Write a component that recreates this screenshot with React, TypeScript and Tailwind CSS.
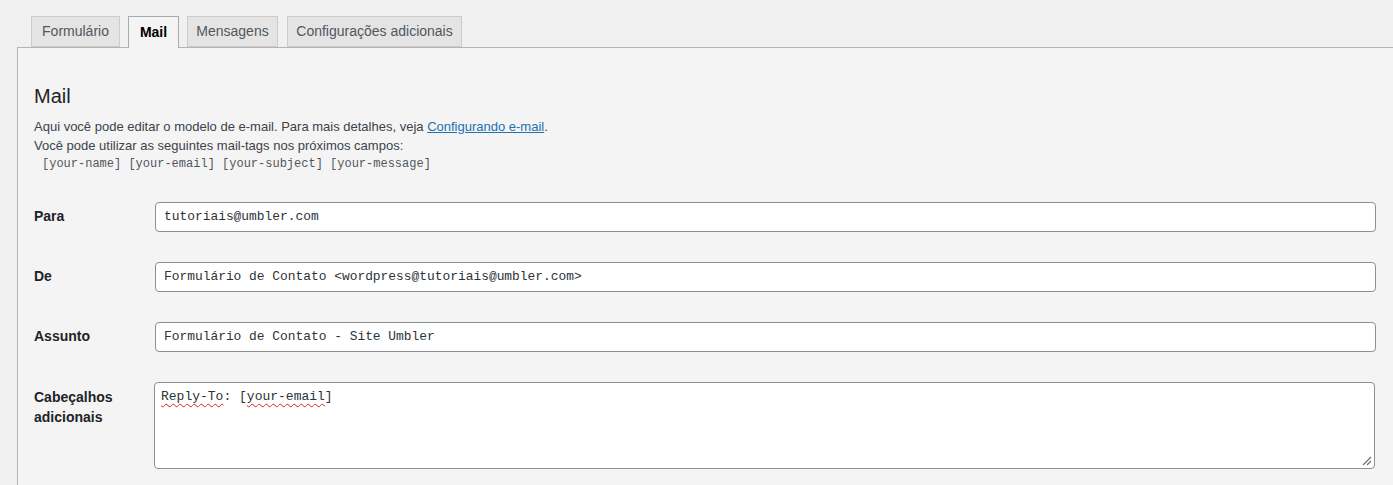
import React from "react";

const sans = { fontFamily: '"Liberation Sans", Arial, sans-serif' };
const mono = { fontFamily: '"Liberation Mono", "DejaVu Sans Mono", monospace' };

function Tab({ label, active, w }: { label: string; active?: boolean; w: string }) {
  return (
    <div
      className={
        active
          ? `relative z-10 -mb-px flex h-[32px] ${w} items-center justify-center border border-b-0 border-[#aaaaaa] bg-[#f4f4f4] text-[14px] font-bold text-[#000]`
          : `-mb-px flex h-[31px] ${w} items-center justify-center border border-[#cccccc] bg-[#e4e4e4] text-[14px] text-[#50575e]`
      }
    >
      {label}
    </div>
  );
}

function Row({ label, value }: { label: string; value: string }) {
  return (
    <div className="grid grid-cols-[121px_1fr] py-[15px]">
      <div className="pt-[4px] text-[14px] leading-[20px] font-bold text-[#1d2327]">{label}</div>
      <div
        className="flex h-[30px] items-center rounded-[4px] border border-[#8c8f94] bg-white px-[8px] text-[12.9px] text-[#2c3338]"
        style={mono}
      >
        {value}
      </div>
    </div>
  );
}

export default function App() {
  return (
    <div className="flex h-[485px] w-full flex-col overflow-hidden bg-[#f0f0f0] pt-[16px] pl-[17px]" style={sans}>
      <div className="flex pl-[14px]">
        <Tab label="Formulário" w="w-[89px]" />
        <div className="w-[8px]" />
        <Tab label="Mail" active w="w-[51px]" />
        <div className="w-[8px]" />
        <Tab label="Mensagens" w="w-[91px]" />
        <div className="w-[9px]" />
        <Tab label="Configurações adicionais" w="w-[175px]" />
      </div>
      <div className="flex-1 border-t border-l border-[#b4b4b4] bg-[#f4f4f4] pr-[17px] pl-[16px]">
        <h2 className="mt-[35px] text-[20px] leading-[26px] font-normal text-[#1d2327]">Mail</h2>
        <div className="mt-[8px] text-[13px] leading-[19px] text-[#3c434a]">
          <p>
            Aqui você pode editar o modelo de e-mail. Para mais detalhes, veja{" "}
            <a className="text-[#2271b1] underline">Configurando e-mail</a>.
          </p>
          <p>Você pode utilizar as seguintes mail-tags nos próximos campos:</p>
          <p className="pl-[8px] text-[12px] text-[#50575e]" style={mono}>
            [your-name] [your-email] [your-subject] [your-message]
          </p>
        </div>
        <div className="mt-[13px]">
          <Row label="Para" value="tutoriais@umbler.com" />
          <Row label="De" value="Formulário de Contato <wordpress@tutoriais@umbler.com>" />
          <Row label="Assunto" value="Formulário de Contato - Site Umbler" />
          <div className="grid grid-cols-[120px_1fr] py-[15px]">
            <div className="pt-[5px] text-[14px] leading-[20px] font-bold text-[#1d2327]">
              Cabeçalhos
              <br />
              adicionais
            </div>
            <div
              className="relative mr-[1px] h-[87px] rounded-[4px] border border-[#8c8f94] bg-white px-[6px] pt-[4px] text-[13px] leading-[20px] text-[#2c3338]"
              style={mono}
            >
              <span className="underline decoration-[#e02020] decoration-wavy decoration-1 underline-offset-[3px]">Reply-To</span>: [
              <span className="underline decoration-[#e02020] decoration-wavy decoration-1 underline-offset-[3px]">your-email</span>]
              <svg className="absolute right-[2px] bottom-[2px]" width="10" height="10" viewBox="0 0 10 10">
                <line x1="1" y1="9" x2="9" y2="1" stroke="#767676" strokeWidth="1.2" />
                <line x1="5" y1="9" x2="9" y2="5" stroke="#767676" strokeWidth="1.2" />
              </svg>
            </div>
          </div>
        </div>
      </div>
    </div>
  );
}
